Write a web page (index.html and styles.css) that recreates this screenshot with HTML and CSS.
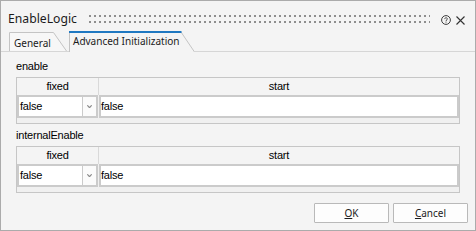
FILE: index.html
```html
<!DOCTYPE html>
<html>
<head>
<meta charset="utf-8">
<link rel="stylesheet" href="styles.css">
</head>
<body>
<div class="window">
  <div class="titlebar">
    <span class="title">EnableLogic</span>
    <div class="grip"></div>
    <svg class="help" width="10" height="10" viewBox="0 0 10 10"><circle cx="5" cy="5" r="4.4" fill="none" stroke="#3c3c3c" stroke-width="1"/><path d="M3.6 4.1 C3.6 2.4 6.4 2.4 6.4 3.9 C6.4 4.8 5 4.9 5 6" fill="none" stroke="#3c3c3c" stroke-width="0.9"/><rect x="4.5" y="6.6" width="1" height="1" fill="#3c3c3c"/></svg>
    <svg class="close" width="9" height="9" viewBox="0 0 9 9"><path d="M0.5 0.5 L8.5 8.5 M8.5 0.5 L0.5 8.5" stroke="#333" stroke-width="1.1"/></svg>
  </div>
  <div class="tabs">
    <div class="tab">
      <svg class="tab-shape" width="58" height="19" viewBox="0 0 58 19"><path d="M0.5 19 V0.5 H44.5 L57.5 19" fill="#f7f7f7" stroke="#c4c4c4"/></svg>
      <span class="tab-label">General</span>
    </div>
    <div class="tab active">
      <svg class="tab-shape" width="126" height="21" viewBox="0 0 126 21"><path d="M0.5 21 V1 H112 L125.5 21" fill="#f4f4f4" stroke="#c4c4c4"/><path d="M0 1 H112.5" stroke="#1f78c1" stroke-width="2"/></svg>
      <span class="tab-label">Advanced Initialization</span>
    </div>
  </div>
  <div class="panel">
    <div class="label">enable</div>
    <div class="grid">
      <div class="grid-head"><div class="col-fixed">fixed</div><div class="col-start">start</div></div>
      <div class="grid-row">
        <div class="cell combo"><span class="combo-value">false</span><span class="combo-btn"><svg width="5" height="3" viewBox="0 0 5 3"><path d="M0.3 0.3 L2.5 2.7 L4.7 0.3" fill="none" stroke="#8a8a8a" stroke-width="1.2"/></svg></span></div>
        <div class="cell text">false</div>
      </div>
    </div>
    <div class="label">internalEnable</div>
    <div class="grid">
      <div class="grid-head"><div class="col-fixed">fixed</div><div class="col-start">start</div></div>
      <div class="grid-row">
        <div class="cell combo"><span class="combo-value">false</span><span class="combo-btn"><svg width="5" height="3" viewBox="0 0 5 3"><path d="M0.3 0.3 L2.5 2.7 L4.7 0.3" fill="none" stroke="#8a8a8a" stroke-width="1.2"/></svg></span></div>
        <div class="cell text">false</div>
      </div>
    </div>
  </div>
  <div class="footer">
    <button class="btn"><u>O</u>K</button>
    <button class="btn"><u>C</u>ancel</button>
  </div>
</div>
</body>
</html>
```

FILE: styles.css
```css
html, body {
  margin: 0;
  padding: 0;
  background: #f4f4f4;
}

.window {
  box-sizing: border-box;
  width: 476px;
  height: 231px;
  border: 1px solid #ababab;
  background: #f4f4f4;
  display: flex;
  flex-direction: column;
  font-family: "Liberation Sans", Arial, sans-serif;
  color: #000;
}

.titlebar {
  display: flex;
  align-items: flex-start;
  height: 30px;
  box-sizing: border-box;
  padding: 10px 10px 0 7px;
}

.title {
  font-family: "Noto Sans", sans-serif;
  font-size: 12.2px;
  line-height: 16px;
  color: #1b1b1b;
}

.grip {
  flex: 1;
  height: 8px;
  margin: 4px 11px 0 9px;
  background-image:
    linear-gradient(90deg, #f4f4f4 3px, transparent 3px),
    linear-gradient(#8e8e8e 2px, transparent 2px);
  background-size: 5px 6px, 5px 6px;
}

.help {
  margin-top: 4px;
  margin-right: 5px;
}

.close {
  margin-top: 5px;
}

.tabs {
  display: flex;
  align-items: flex-end;
  height: 21px;
  box-sizing: border-box;
  border-bottom: 1px solid #d6d6d6;
  padding-left: 8px;
}

.tab {
  position: relative;
  width: 58px;
  height: 19px;
  box-sizing: border-box;
  padding: 4px 0 0 5px;
  margin-right: 2px;
  font-family: "Noto Sans", sans-serif;
  font-size: 10px;
  line-height: 14px;
  color: #1b1b1b;
}

.tab.active {
  width: 126px;
  height: 21px;
  margin-bottom: -1px;
  padding: 3px 0 0 4px;
  background: #f4f4f4;
}

.tab-shape {
  position: absolute;
  left: 0;
  top: 0;
}

.tab-label {
  position: relative;
  white-space: nowrap;
}

.panel {
  flex: 1;
  padding: 3px 15px 0 15px;
}

.label {
  font-size: 11px;
  line-height: 16px;
  letter-spacing: -0.2px;
  margin: 3px 0;
}

.grid {
  box-sizing: border-box;
  width: 444px;
  height: 47px;
  border: 1px solid #c6c6c6;
  background: #f0f0f0;
  font-size: 11px;
  letter-spacing: -0.2px;
}

.grid-head {
  display: flex;
  height: 17px;
  line-height: 17px;
  background: #f4f4f4;
}

.col-fixed {
  box-sizing: border-box;
  width: 82px;
  border-right: 1px solid #d9d9d9;
  text-align: center;
}

.col-start {
  flex: 1;
  text-align: center;
}

.grid-row {
  display: flex;
  gap: 1px;
  height: 23px;
}

.cell {
  box-sizing: border-box;
  height: 23px;
  border: 2px solid #cbcbcb;
  background: #fff;
  line-height: 19px;
}

.combo {
  width: 81px;
  display: flex;
}

.combo-value {
  flex: 1;
  padding-left: 1px;
}

.combo-btn {
  box-sizing: border-box;
  width: 14px;
  border-left: 1px solid #cbcbcb;
  background: #fbfbfb;
  display: flex;
  align-items: center;
  justify-content: center;
}

.text {
  flex: 1;
  padding-left: 0;
}

.footer {
  display: flex;
  justify-content: flex-end;
  gap: 4px;
  padding: 0 7px 7px 0;
}

.btn {
  box-sizing: border-box;
  width: 75px;
  height: 20px;
  padding: 0;
  margin: 0;
  border: 1px solid #b9b9b9;
  border-radius: 1px;
  background: #fdfdfd;
  font-family: "Noto Sans", sans-serif;
  font-size: 10px;
  line-height: 18px;
  color: #1b1b1b;
}

.btn u {
  text-underline-offset: 1px;
}
```
